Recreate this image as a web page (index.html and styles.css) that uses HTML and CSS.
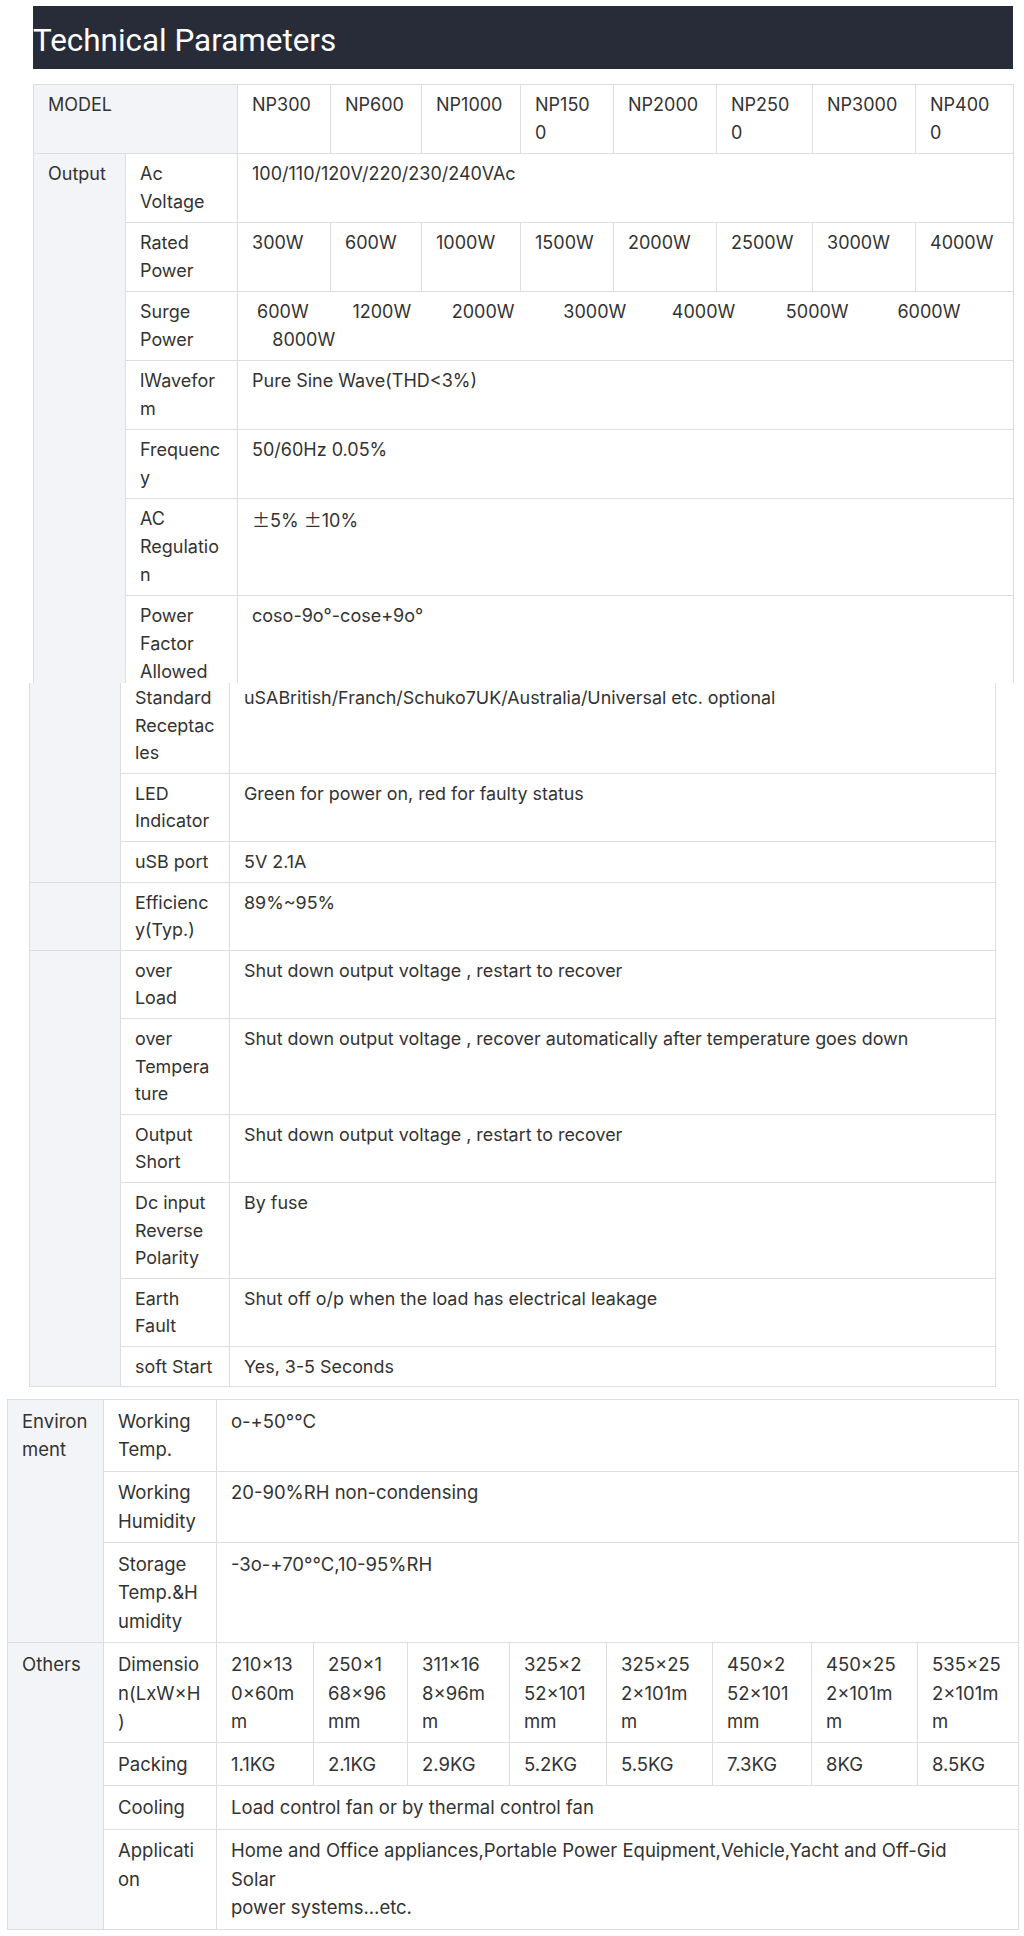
FILE: index.html
```html
<!DOCTYPE html>
<html lang="en">
<head>
<meta charset="utf-8">
<title>Technical Parameters</title>
<link rel="stylesheet" href="styles.css">
</head>
<body>
<div class="shot shot1">
  <h2 class="title">Technical Parameters</h2>
  <table class="spec t1">
    <colgroup>
      <col class="c92"><col class="c112"><col class="c93"><col class="c91"><col class="c99"><col class="c93"><col class="c103"><col class="c96"><col class="c103"><col class="c98">
    </colgroup>
    <tr>
      <th colspan="2" class="grp">MODEL</th>
      <td>NP300</td><td>NP600</td><td>NP1000</td><td>NP1500</td><td>NP2000</td><td>NP2500</td><td>NP3000</td><td>NP4000</td>
    </tr>
    <tr>
      <th rowspan="7" class="grp">Output</th>
      <td>Ac Voltage</td>
      <td colspan="8">100/110/120V/220/230/240VAc</td>
    </tr>
    <tr>
      <td>Rated Power</td>
      <td>300W</td><td>600W</td><td>1000W</td><td>1500W</td><td>2000W</td><td>2500W</td><td>3000W</td><td>4000W</td>
    </tr>
    <tr>
      <td>Surge Power</td>
      <td colspan="8">&nbsp;600W&nbsp;&nbsp;&nbsp;&nbsp;&nbsp;&nbsp;&nbsp;&thinsp; 1200W&nbsp;&nbsp;&nbsp;&nbsp;&nbsp;&nbsp;&nbsp; 2000W&nbsp;&nbsp;&nbsp;&nbsp;&nbsp;&nbsp;&nbsp;&nbsp;&thinsp; 3000W&nbsp;&nbsp;&nbsp;&nbsp;&nbsp;&nbsp;&nbsp;&nbsp; 4000W&nbsp;&nbsp;&nbsp;&nbsp;&nbsp;&nbsp;&nbsp;&nbsp;&nbsp; 5000W&nbsp;&nbsp;&nbsp;&nbsp;&nbsp;&nbsp;&nbsp;&nbsp;&thinsp; 6000W<br>&nbsp;&nbsp;&nbsp;&nbsp;8000W</td>
    </tr>
    <tr>
      <td>lWaveform</td>
      <td colspan="8">Pure Sine Wave(THD&lt;3%)</td>
    </tr>
    <tr>
      <td>Frequency</td>
      <td colspan="8">50/60Hz 0.05%</td>
    </tr>
    <tr>
      <td>AC Regulation</td>
      <td colspan="8"><span class="cjk">±</span>5% <span class="cjk">±</span>10%</td>
    </tr>
    <tr>
      <td>Power Factor Allowed</td>
      <td colspan="8">coso-9o°-cose+9o°</td>
    </tr>
  </table>
</div>

<div class="shot shot2">
  <table class="spec t2">
    <colgroup>
      <col class="c91"><col class="c109"><col class="c766">
    </colgroup>
    <tr>
      <th rowspan="3" class="grp"></th>
      <td>Standard Receptacles</td>
      <td>uSABritish/Franch/Schuko7UK/Australia/Universal etc. optional</td>
    </tr>
    <tr>
      <td>LED Indicator</td>
      <td>Green for power on, red for faulty status</td>
    </tr>
    <tr>
      <td>uSB port</td>
      <td>5V 2.1A</td>
    </tr>
    <tr>
      <th class="grp"></th>
      <td>Efficiency(Typ.)</td>
      <td>89%~95%</td>
    </tr>
    <tr>
      <th rowspan="6" class="grp"></th>
      <td>over Load</td>
      <td>Shut down output voltage , restart to recover</td>
    </tr>
    <tr>
      <td>over Tempera<wbr>ture</td>
      <td>Shut down output voltage , recover automatically after temperature goes down</td>
    </tr>
    <tr>
      <td>Output Short</td>
      <td>Shut down output voltage , restart to recover</td>
    </tr>
    <tr>
      <td>Dc input Reverse Polarity</td>
      <td>By fuse</td>
    </tr>
    <tr>
      <td>Earth Fault</td>
      <td>Shut off o/p when the load has electrical leakage</td>
    </tr>
    <tr>
      <td>soft Start</td>
      <td>Yes, 3-5 Seconds</td>
    </tr>
  </table>
</div>

<div class="shot shot3">
  <table class="spec t3">
    <colgroup>
      <col class="c96"><col class="c113"><col class="c97"><col class="c94"><col class="c102"><col class="c97"><col class="c106"><col class="c99"><col class="c106"><col class="c101">
    </colgroup>
    <tr>
      <th rowspan="3" class="grp">Environment</th>
      <td>Working Temp.</td>
      <td colspan="8">o-+50°°C</td>
    </tr>
    <tr>
      <td>Working Humidity</td>
      <td colspan="8">20-90%RH non-condensing</td>
    </tr>
    <tr>
      <td>Storage Temp.&amp;Humidity</td>
      <td colspan="8">-3o-+70°°C,10-95%RH</td>
    </tr>
    <tr>
      <th rowspan="4" class="grp">Others</th>
      <td>Dimension(LxW×H)</td>
      <td>210×130×60mm</td><td>250×168×96mm</td><td>311×16<br>8×96m<br>m</td><td>325×252×101mm</td><td>325×252×101mm</td><td>450×2<br>52×101<br>mm</td><td>450×252×101mm</td><td>535×252×101mm</td>
    </tr>
    <tr>
      <td>Packing</td>
      <td>1.1KG</td><td>2.1KG</td><td>2.9KG</td><td>5.2KG</td><td>5.5KG</td><td>7.3KG</td><td>8KG</td><td>8.5KG</td>
    </tr>
    <tr>
      <td>Cooling</td>
      <td colspan="8">Load control fan or by thermal control fan</td>
    </tr>
    <tr>
      <td>Application</td>
      <td colspan="8">Home and Office appliances,Portable Power Equipment,Vehicle,Yacht and Off-Gid<br>Solar<br>power systems...etc.</td>
    </tr>
  </table>
</div>
</body>
</html>
```

FILE: styles.css
```css
html, body {
  margin: 0;
  padding: 0;
  background: #ffffff;
}

body {
  color: #333333;
  font-family: Inter, "Noto Sans", "Liberation Sans", sans-serif;
}

.shot {
  overflow: hidden;
  box-sizing: border-box;
}

.shot1 {
  height: 683px;
  padding: 6px 0 0 33px;
}

.shot2 {
  height: 716px;
  padding-left: 29px;
}

.shot3 {
  height: 537px;
  padding-left: 7px;
}

.title {
  margin: 0;
  width: 980px;
  height: 63px;
  box-sizing: border-box;
  padding-top: 17px;
  background: #272c38;
  color: #ffffff;
  font-family: Roboto, "Liberation Sans", sans-serif;
  font-weight: 400;
  font-size: 31.4px;
  line-height: 36px;
  white-space: nowrap;
}

.spec {
  border-collapse: collapse;
  table-layout: fixed;
  font-size: 18px;
  line-height: 28px;
}

.spec th,
.spec td {
  border: 1px solid #dddddd;
  padding: 6px 14px;
  text-align: left;
  vertical-align: top;
  font-weight: 400;
  overflow-wrap: anywhere;
}

.spec .grp {
  background: #f3f4f7;
}

.cjk {
  font-family: "Noto Sans CJK SC", sans-serif;
}

.t1 {
  width: 980px;
  margin-top: 15px;
}

.t2 {
  width: 966px;
  margin-top: -6px;
  font-size: 17.9px;
  line-height: 27.6px;
}

.t3 {
  width: 1011px;
  font-size: 18.5px;
  line-height: 28.5px;
}

.t3 th,
.t3 td {
  padding: 6.8px 14px;
}

.c91 { width: 91px; }
.c92 { width: 92px; }
.c93 { width: 93px; }
.c94 { width: 94px; }
.c96 { width: 96px; }
.c97 { width: 97px; }
.c98 { width: 98px; }
.c99 { width: 99px; }
.c101 { width: 101px; }
.c102 { width: 102px; }
.c103 { width: 103px; }
.c106 { width: 106px; }
.c109 { width: 109px; }
.c112 { width: 112px; }
.c113 { width: 113px; }
.c766 { width: 766px; }
```
